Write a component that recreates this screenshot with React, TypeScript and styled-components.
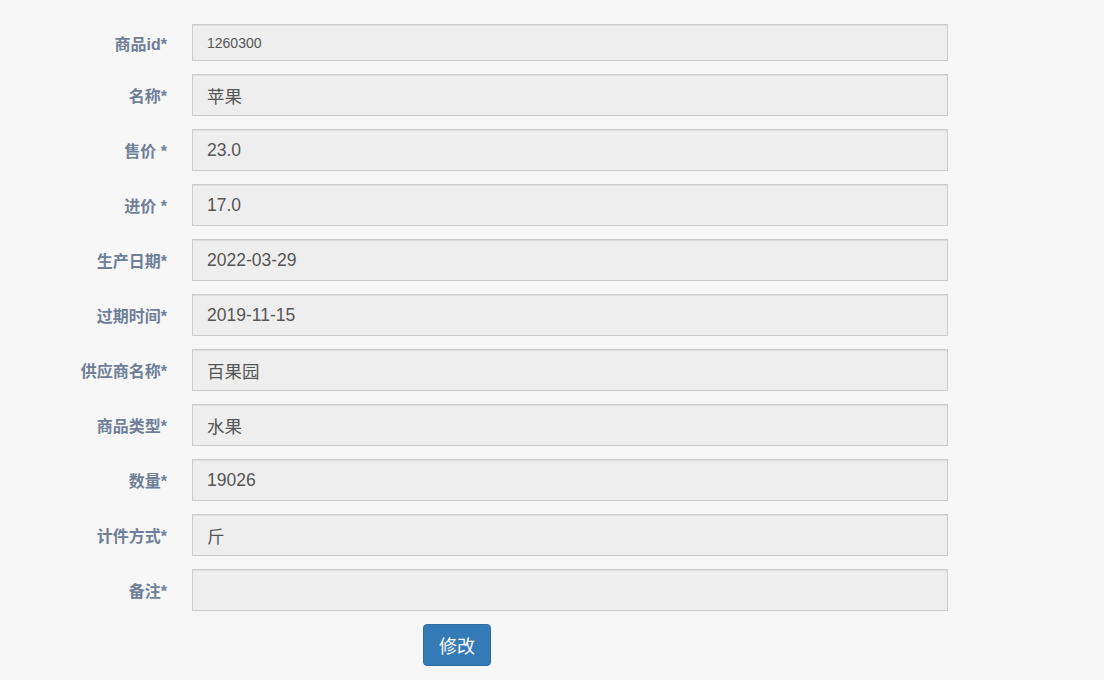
import React from 'react';
import styled, { createGlobalStyle } from 'styled-components';

const GlobalStyle = createGlobalStyle`
  html, body {
    margin: 0;
    padding: 0;
    background: #f7f7f7;
  }
  body {
    font-family: "Liberation Sans", Arial, "Noto Sans CJK SC", sans-serif;
  }
`;

const fields: { label: string; value: string; small?: boolean }[] = [
  { label: '商品id*', value: '1260300', small: true },
  { label: '名称*', value: '苹果' },
  { label: '售价 *', value: '23.0' },
  { label: '进价 *', value: '17.0' },
  { label: '生产日期*', value: '2022-03-29' },
  { label: '过期时间*', value: '2019-11-15' },
  { label: '供应商名称*', value: '百果园' },
  { label: '商品类型*', value: '水果' },
  { label: '数量*', value: '19026' },
  { label: '计件方式*', value: '斤' },
  { label: '备注*', value: '' },
];

export default function App() {
  return (
    <>
      <GlobalStyle />
      <Page>
        <Form>
          {fields.map((f) => (
            <Row key={f.label} small={f.small}>
              <Label>{f.label}</Label>
              <Input small={f.small} defaultValue={f.value} readOnly />
            </Row>
          ))}
          <Actions>
            <Button type="button">修改</Button>
          </Actions>
        </Form>
      </Page>
    </>
  );
}

const Page = styled.div`
  width: 1104px;
  height: 680px;
  box-sizing: border-box;
  padding-top: 24px;
  overflow: hidden;
`;
const Form = styled.form`
  display: flex;
  flex-direction: column;
  gap: 13px;
`;
const Row = styled.div<{ small?: boolean }>`
  display: grid;
  grid-template-columns: 167px 756px;
  column-gap: 25px;
  align-items: center;
  height: ${({ small }) => (small ? 37 : 42)}px;
`;
const Label = styled.label`
  text-align: right;
  font-family: "Liberation Sans", Arial, "Noto Sans CJK SC", sans-serif;
  font-weight: bold;
  font-size: 16px;
  color: #6f7f98;
  white-space: nowrap;
`;
const Input = styled.input<{ small?: boolean }>`
  box-sizing: border-box;
  width: 756px;
  height: ${({ small }) => (small ? 37 : 42)}px;
  margin: 0;
  padding: 0 14px;
  border: 1px solid #cccccc;
  border-radius: 0;
  background: #eeeeee;
  box-shadow: inset 0 1px 1px rgba(0, 0, 0, 0.075);
  color: #555555;
  font-family: "Liberation Sans", Arial, "Noto Sans CJK SC", sans-serif;
  font-size: ${({ small }) => (small ? 14 : 17.5)}px;
  outline: none;
`;
const Actions = styled.div`
  padding-left: 423px;
`;
const Button = styled.button`
  width: 68px;
  height: 42px;
  border: 1px solid #2e6da4;
  border-radius: 4px;
  background: #337ab7;
  color: #ffffff;
  font-family: "Liberation Sans", Arial, "Noto Sans CJK SC", sans-serif;
  font-size: 18px;
  padding: 0;
  cursor: pointer;
`;
